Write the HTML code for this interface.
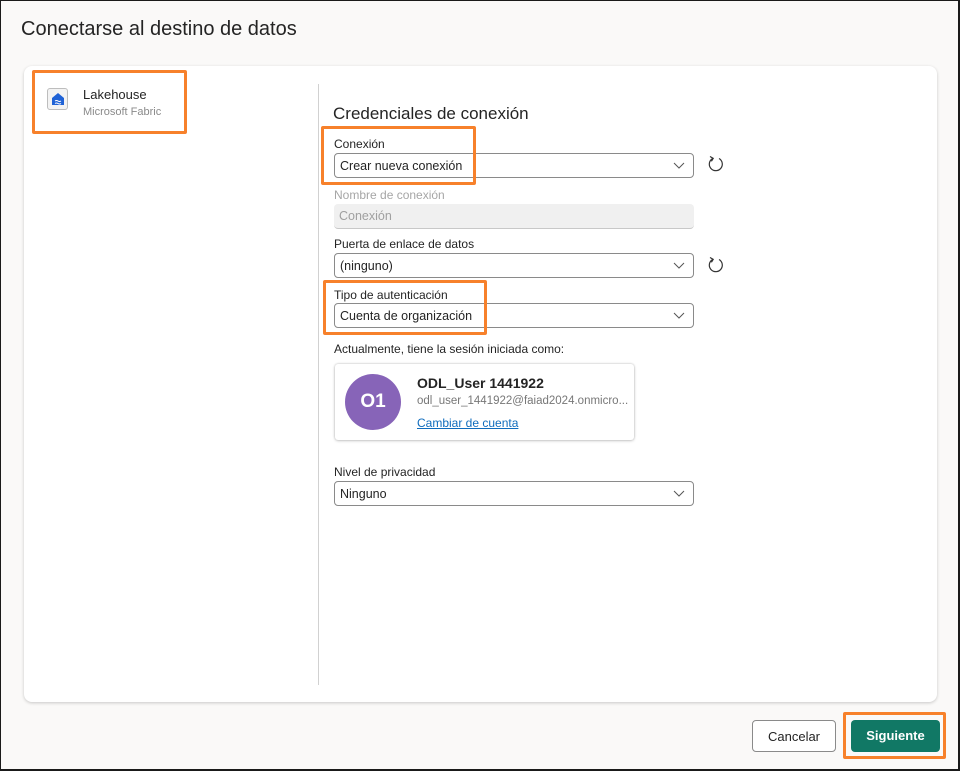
<!DOCTYPE html>
<html><head><meta charset="utf-8"><style>
*{box-sizing:border-box;margin:0;padding:0}
body{width:960px;height:771px;background:#faf9f8;font-family:"Liberation Sans",sans-serif;color:#242424;position:relative;overflow:hidden}
.frame{position:absolute;left:0;top:0;width:960px;height:771px;border:1px solid #1a1a1a;border-width:1px 2px 2px 1px;pointer-events:none}
.title{position:absolute;left:21px;top:18px;font-size:20px;color:#242424}
.card{position:absolute;left:24px;top:66px;width:913px;height:636px;background:#fff;border-radius:8px;box-shadow:0 1px 3px rgba(0,0,0,.2)}
.orange{position:absolute;border:3px solid #f7812b;border-radius:2px}
.div{position:absolute;left:318px;top:84px;width:1px;height:601px;background:#d1d1d1}
.lbl{position:absolute;left:334px;font-size:12px;color:#242424}
.sel{position:absolute;left:334px;width:360px;height:25px;border:1px solid #8a8a8a;border-radius:4px;font-size:12.5px;padding:5px 0 0 5px;color:#242424}
.sel svg{position:absolute;right:8px;top:8px}
.refresh{position:absolute;left:707px}
.btn{position:absolute;height:32px;border-radius:4px;font-size:13px;text-align:center;line-height:31px}
</style></head><body>
<div class="title">Conectarse al destino de datos</div>
<div class="card"></div>
<div style="position:absolute;left:47px;top:88px;width:21px;height:22px;border:1px solid #bdbdbd;border-radius:3px;background:#f3f3f3"></div>
<svg style="position:absolute;left:50px;top:91px" width="16" height="16" viewBox="0 0 16 16"><path d="M2 7 L8 2 L14 7 V14 H2Z" fill="#1f62d6"/><path d="M5 10q1.5-1 3 0t3 0M5 12.5q1.5-1 3 0t3 0" stroke="#fff" fill="none" stroke-width="1"/></svg>
<div style="position:absolute;left:83px;top:87px;font-size:13px">Lakehouse</div>
<div style="position:absolute;left:83px;top:106px;font-size:11px;color:#8a8a8a">Microsoft Fabric</div>
<div class="orange" style="left:32px;top:70px;width:155px;height:64px"></div>
<div class="div"></div>
<div style="position:absolute;left:333px;top:104px;font-size:17px">Credenciales de conexión</div>
<div class="lbl" style="top:137px">Conexión</div>
<div class="sel" style="top:153px">Crear nueva conexión<svg width="12" height="8"><path d="M1 1l5 5 5-5" stroke="#555" fill="none"/></svg></div>
<svg class="refresh" style="top:155px" width="18" height="18" viewBox="0 0 18 18"><path d="M12 3.5A6.5 6.5 0 1 1 6 3.3" stroke="#333" fill="none" stroke-width="1.2"/><path d="M3 1.5l3.2 1.8-1.8 3" stroke="#333" fill="none" stroke-width="1.2"/></svg>
<div class="lbl" style="top:188px;color:#a6a6a6">Nombre de conexión</div>
<div class="sel" style="top:204px;background:#f0f0f0;border:none;border-bottom:1px solid #c8c8c8;color:#a0a0a0">Conexión</div>
<div class="lbl" style="top:237px">Puerta de enlace de datos</div>
<div class="sel" style="top:253px">(ninguno)<svg width="12" height="8"><path d="M1 1l5 5 5-5" stroke="#555" fill="none"/></svg></div>
<svg class="refresh" style="top:256px" width="18" height="18" viewBox="0 0 18 18"><path d="M12 3.5A6.5 6.5 0 1 1 6 3.3" stroke="#333" fill="none" stroke-width="1.2"/><path d="M3 1.5l3.2 1.8-1.8 3" stroke="#333" fill="none" stroke-width="1.2"/></svg>
<div class="lbl" style="top:288px">Tipo de autenticación</div>
<div class="sel" style="top:303px">Cuenta de organización<svg width="12" height="8"><path d="M1 1l5 5 5-5" stroke="#555" fill="none"/></svg></div>
<div class="orange" style="left:321px;top:126px;width:155px;height:59px"></div>
<div class="orange" style="left:323px;top:280px;width:164px;height:55px"></div>
<div class="lbl" style="top:342px">Actualmente, tiene la sesión iniciada como:</div>
<div style="position:absolute;left:335px;top:364px;width:299px;height:76px;background:#fff;border-radius:3px;box-shadow:0 0 2px rgba(0,0,0,.25),0 1px 3px rgba(0,0,0,.15)"></div>
<div style="position:absolute;left:345px;top:374px;width:56px;height:56px;border-radius:50%;background:#8764b8;color:#fff;font-size:19px;font-weight:bold;text-align:center;line-height:56px">O1</div>
<div style="position:absolute;left:417px;top:375px;font-size:14px;font-weight:bold">ODL_User 1441922</div>
<div style="position:absolute;left:417px;top:395px;font-size:11.5px;color:#777">odl_user_1441922@faiad2024.onmicro...</div>
<div style="position:absolute;left:417px;top:416px;font-size:12px;color:#0f6cbd;text-decoration:underline">Cambiar de cuenta</div>
<div class="lbl" style="top:465px">Nivel de privacidad</div>
<div class="sel" style="top:481px">Ninguno<svg width="12" height="8"><path d="M1 1l5 5 5-5" stroke="#555" fill="none"/></svg></div>
<div class="btn" style="left:752px;top:720px;width:84px;border:1px solid #8a8a8a;background:#fff">Cancelar</div>
<div class="btn" style="left:851px;top:720px;width:89px;background:#117865;color:#fff;font-weight:bold;line-height:32px">Siguiente</div>
<div class="orange" style="left:843px;top:712px;width:103px;height:47px"></div>
<div class="frame"></div>
</body></html>
